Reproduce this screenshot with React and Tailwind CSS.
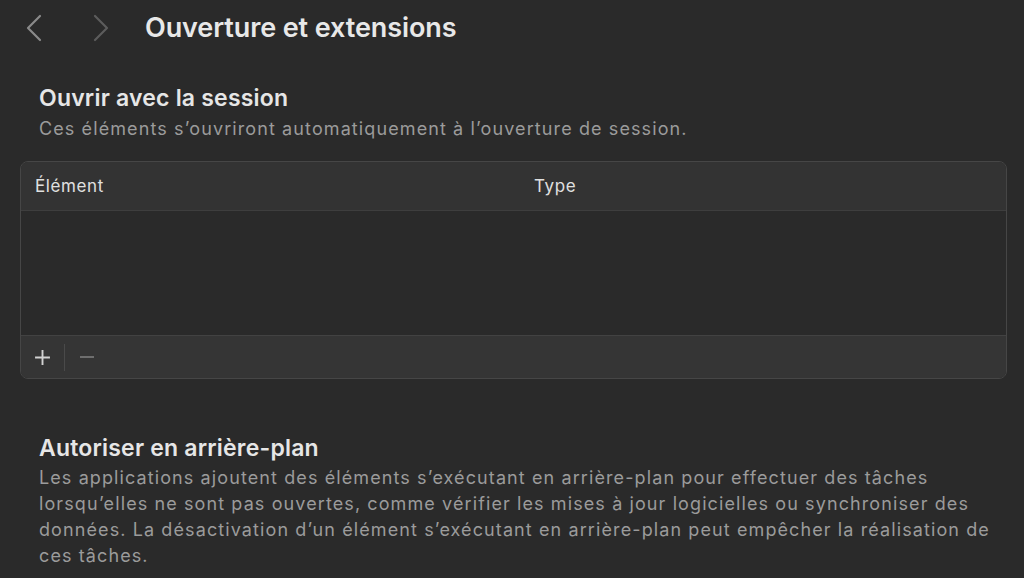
import React from "react";

export default function App() {
  return (
    <div
      className="w-[1024px] h-[578px] overflow-hidden bg-[#2a2a2a] text-[#e5e5e5]"
      style={{ fontFamily: "Inter, 'Noto Sans', sans-serif" }}
    >
      {/* Toolbar */}
      <div className="flex items-center h-[56px]">
        <div className="flex items-center pl-[26px] gap-[51px]">
          <svg width="16" height="28" viewBox="0 0 16 28" fill="none">
            <path d="M14 2 L2 14 L14 26" stroke="#8a8a8a" strokeWidth="2.2" strokeLinecap="round" strokeLinejoin="round" />
          </svg>
          <svg width="16" height="28" viewBox="0 0 16 28" fill="none">
            <path d="M2 2 L14 14 L2 26" stroke="#5c5c5c" strokeWidth="2.2" strokeLinecap="round" strokeLinejoin="round" />
          </svg>
        </div>
        <div className="ml-[36px] text-[27px] leading-[32px] font-semibold tracking-[-0.1px] text-[#e8e8e8]">
          Ouverture et extensions
        </div>
      </div>

      {/* Section 1 */}
      <div className="pl-[39px] pt-[28px]">
        <div className="text-[23px] font-semibold leading-[28px] tracking-[0.2px] text-[#e6e6e6]">Ouvrir avec la session</div>
        <div className="text-[18px] leading-[24px] tracking-[1.1px] text-[#9b9b9b] mt-[5px]">
          Ces éléments s’ouvriront automatiquement à l’ouverture de session.
        </div>
      </div>

      {/* Table */}
      <div className="ml-[20px] mr-[17px] mt-[20px] h-[218px] rounded-[8px] border border-[#464646] overflow-hidden flex flex-col bg-[#2b2b2b]">
        <div className="h-[49px] flex items-center bg-[#333333] border-b border-[#3e3e3e] text-[17px] leading-[24px] tracking-[0.6px] text-[#e0e0e0]">
          <div className="pl-[14px] w-[513px]">Élément</div>
          <div>Type</div>
        </div>
        <div className="flex-1 bg-[#2a2a2a]"></div>
        <div className="h-[43px] flex items-center bg-[#353535] border-t border-[#424242]">
          <div className="w-[43px] flex justify-center">
            <svg width="17" height="17" viewBox="0 0 16 16">
              <path d="M8 1 V15 M1 8 H15" stroke="#d2d2d2" strokeWidth="1.8" />
            </svg>
          </div>
          <div className="w-px h-[27px] bg-[#4a4a4a]"></div>
          <div className="pl-[14px] flex items-center">
            <svg width="16" height="16" viewBox="0 0 16 16">
              <path d="M1 8 H15" stroke="#6e6e6e" strokeWidth="1.8" />
            </svg>
          </div>
        </div>
      </div>

      {/* Section 2 */}
      <div className="pl-[39px] pt-[55px]">
        <div className="text-[23px] font-semibold leading-[28px] tracking-[0.2px] text-[#e6e6e6]">Autoriser en arrière-plan</div>
        <div className="text-[18px] leading-[26px] tracking-[1.1px] text-[#9b9b9b] mt-[3px] w-[965px]">
          Les applications ajoutent des éléments s’exécutant en arrière-plan pour effectuer des tâches lorsqu’elles ne sont pas ouvertes, comme vérifier les mises à jour logicielles ou synchroniser des données. La désactivation d’un élément s’exécutant en arrière-plan peut empêcher la réalisation de ces tâches.
        </div>
      </div>
    </div>
  );
}
